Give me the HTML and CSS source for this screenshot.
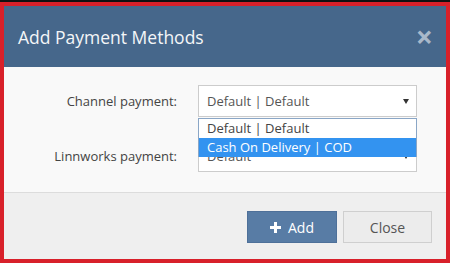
FILE: index.html
```html
<!DOCTYPE html>
<html lang="en">
<head>
    <meta charset="UTF-8">
    <title>Add Payment Methods</title>
    <link rel="stylesheet" href="styles.css">
</head>
<body>
    <div class="shot">
        <div class="modal">
            <div class="modal-header">
                <h1>Add Payment Methods</h1>
                <span class="close-x">&times;</span>
            </div>
            <div class="modal-body">
                <label>Channel payment:</label>
                <div class="select-wrap">
                    <div class="fake-select">Default | Default<span class="caret"></span></div>
                    <ul class="dropdown">
                        <li>Default | Default</li>
                        <li class="active">Cash On Delivery | COD</li>
                    </ul>
                </div>
                <label>Linnworks payment:</label>
                <div class="select-wrap">
                    <div class="fake-select">Default<span class="caret"></span></div>
                </div>
            </div>
            <div class="modal-footer">
                <button class="btn btn-primary">
                    <svg width="11" height="11" viewBox="0 0 11 11"><path d="M4 0h3v4h4v3H7v4H4V7H0V4h4z" fill="#fff"/></svg>
                    Add
                </button>
                <button class="btn btn-default">Close</button>
            </div>
        </div>
    </div>
</body>
</html>
```
FILE: styles.css
```css
body {
    margin: 0;
    padding: 0;
    background-color: #fff;
    font-family: "Open Sans", "Liberation Sans", sans-serif;
}

/* black line + red frame round the dialog */
.shot {
    width: 450px;
    border-top: 2px solid #111;
}

.modal {
    border: 4px solid #d8202a;
    height: 253px;
    display: flex;
    flex-direction: column;
}

.modal-header {
    background-color: #46678b;
    height: 61px;
    display: flex;
    align-items: center;
    justify-content: space-between;
    padding: 0 13px 0 14px;
}

.modal-header h1 {
    margin: 0;
    font-size: 17.5px;
    font-weight: normal;
    color: #f4f6f8;
}

.close-x {
    color: #a9b8c9;
    font-size: 30px;
    font-weight: bold;
    line-height: 1;
}

/* form rows */
.modal-body {
    background-color: #f9f9f9;
    border-bottom: 1px solid #dcdcdc;
    padding: 18px 0 20px 0;
    display: grid;
    grid-template-columns: 173px 219px;
    column-gap: 21px;
    row-gap: 23px;
    align-items: center;
}

.modal-body label {
    text-align: right;
    font-size: 13px;
    color: #444;
}

.select-wrap {
    position: relative;
}

.fake-select {
    height: 30px;
    line-height: 30px;
    border: 1px solid #ccc;
    background-color: #fff;
    padding-left: 8px;
    font-size: 13px;
    color: #555;
    position: relative;
}

.caret {
    position: absolute;
    right: 7px;
    top: 13px;
    border-left: 3px solid transparent;
    border-right: 3px solid transparent;
    border-top: 5px solid #333;
}

/* open list of the first select */
.dropdown {
    position: absolute;
    top: 33px;
    left: 0;
    right: 0;
    margin: 0;
    padding: 0;
    list-style: none;
    background-color: #fff;
    border: 1px solid #8aa6c6;
    border-bottom: none;
    z-index: 2;
}

.dropdown li {
    height: 19px;
    line-height: 19px;
    padding-left: 8px;
    font-size: 13px;
    color: #444;
}

.dropdown li.active {
    background-color: #3393f0;
    color: #fff;
}

.modal-footer {
    flex: 1;
    background-color: #efefef;
    display: flex;
    justify-content: flex-end;
    align-items: flex-start;
    gap: 6px;
    padding: 18px 14px 0 0;
}

.btn {
    height: 32px;
    font-family: "Open Sans", "Liberation Sans", sans-serif;
    font-size: 14px;
    cursor: pointer;
    display: flex;
    align-items: center;
    justify-content: center;
    gap: 7px;
}

.btn-primary {
    width: 90px;
    background-color: #587ca5;
    border: 1px solid #4e7099;
    color: #fff;
}

.btn-default {
    width: 89px;
    background-color: #ececec;
    border: 1px solid #cfcfcf;
    color: #555;
}
```
